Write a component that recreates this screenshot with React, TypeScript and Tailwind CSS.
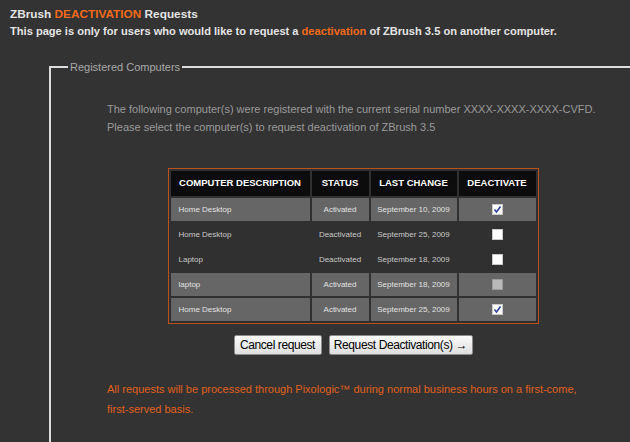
import React from "react";

const rows = [
  { name: "Home Desktop", status: "Activated", date: "September 10, 2009", box: "checked" },
  { name: "Home Desktop", status: "Deactivated", date: "September 25, 2009", box: "empty" },
  { name: "Laptop", status: "Deactivated", date: "September 18, 2009", box: "empty" },
  { name: "laptop", status: "Activated", date: "September 18, 2009", box: "disabled" },
  { name: "Home Desktop", status: "Activated", date: "September 25, 2009", box: "checked" },
];

function Box({ kind }: { kind: string }) {
  if (kind === "disabled") {
    return <span className="inline-block w-[11px] h-[11px] bg-[#b9b9b9] border border-[#9a9a9a] align-middle" />;
  }
  return (
    <span className="inline-flex items-center justify-center w-[11px] h-[11px] bg-white border border-[#c8c8c8] align-middle">
      {kind === "checked" && (
        <svg width="9" height="9" viewBox="0 0 9 9">
          <path d="M1.5 4.5 L3.5 7 L7.5 1.5" stroke="#2b3f9e" strokeWidth="1.6" fill="none" />
        </svg>
      )}
    </span>
  );
}

export default function App() {
  return (
    <div className="w-[630px] h-[442px] bg-[#333333] overflow-hidden font-['Liberation_Sans',Arial,sans-serif]">
      <div className="pl-[10px] pt-[6px]">
        <h1 className="text-[11.8px] leading-[17px] font-bold text-[#e4e4e4]">
          ZBrush <span className="text-[#f26a1b]">DEACTIVATION</span> Requests
        </h1>
        <p className="text-[11.1px] leading-[17px] font-bold text-[#e4e4e4]">
          This page is only for users who would like to request a{" "}
          <span className="text-[#f26a1b]">deactivation</span> of ZBrush 3.5 on another computer.
        </p>
      </div>

      <fieldset className="mt-[20px] ml-[49px] w-[606px] h-[400px] border-l-2 border-t-2 border-[#dcdcdc]">
        <legend className="ml-[17px] px-[2px] text-[11px] leading-[14px] text-[#a8a8a8]">
          Registered Computers
        </legend>

        <div className="pl-[56px] pt-[26px] text-[11px] leading-[18px] text-[#9a9a9a]">
          <p>The following computer(s) were registered with the current serial number XXXX-XXXX-XXXX-CVFD.</p>
          <p>Please select the computer(s) to request deactivation of ZBrush 3.5</p>
        </div>

        <table className="mx-auto mt-[32px] border-[1.5px] border-[#b9521c] border-separate border-spacing-[2px] bg-[#303030]">
          <thead>
            <tr className="bg-[#0c0c0c] text-white text-[9.5px] font-bold h-[25px]">
              <th className="w-[139px] text-center">COMPUTER DESCRIPTION</th>
              <th className="w-[57px] text-center">STATUS</th>
              <th className="w-[86px] text-center">LAST CHANGE</th>
              <th className="w-[77px] text-center">DEACTIVATE</th>
            </tr>
          </thead>
          <tbody>
            {rows.map((r, i) => {
              const on = r.status === "Activated";
              return (
                <tr
                  key={i}
                  className={
                    "h-[23px] text-[8px] " +
                    (on ? "bg-[#666666] text-[#e2e2e2]" : "text-[#c8c8c8]")
                  }
                >
                  <td className="pl-[8px] text-left">{r.name}</td>
                  <td className="text-center">{r.status}</td>
                  <td className="text-center">{r.date}</td>
                  <td className="text-center">
                    <Box kind={r.box} />
                  </td>
                </tr>
              );
            })}
          </tbody>
        </table>

        <div className="flex justify-center gap-[7px] mt-[11px]">
          <button className="w-[88px] h-[20px] rounded-[2px] border border-[#8c8c8c] bg-gradient-to-b from-[#fbfbfb] to-[#dedede] text-[12px] tracking-[-0.4px] whitespace-nowrap text-black">
            Cancel request
          </button>
          <button className="w-[144px] h-[20px] rounded-[2px] border border-[#8c8c8c] bg-gradient-to-b from-[#fbfbfb] to-[#dedede] text-[12px] tracking-[-0.4px] whitespace-nowrap text-black">
            Request Deactivation(s) →
          </button>
        </div>

        <div className="pl-[56px] pt-[24px] text-[11px] leading-[20px] text-[#e0601c]">
          <p>All requests will be processed through Pixologic™ during normal business hours on a first-come,</p>
          <p>first-served basis.</p>
        </div>
      </fieldset>
    </div>
  );
}
